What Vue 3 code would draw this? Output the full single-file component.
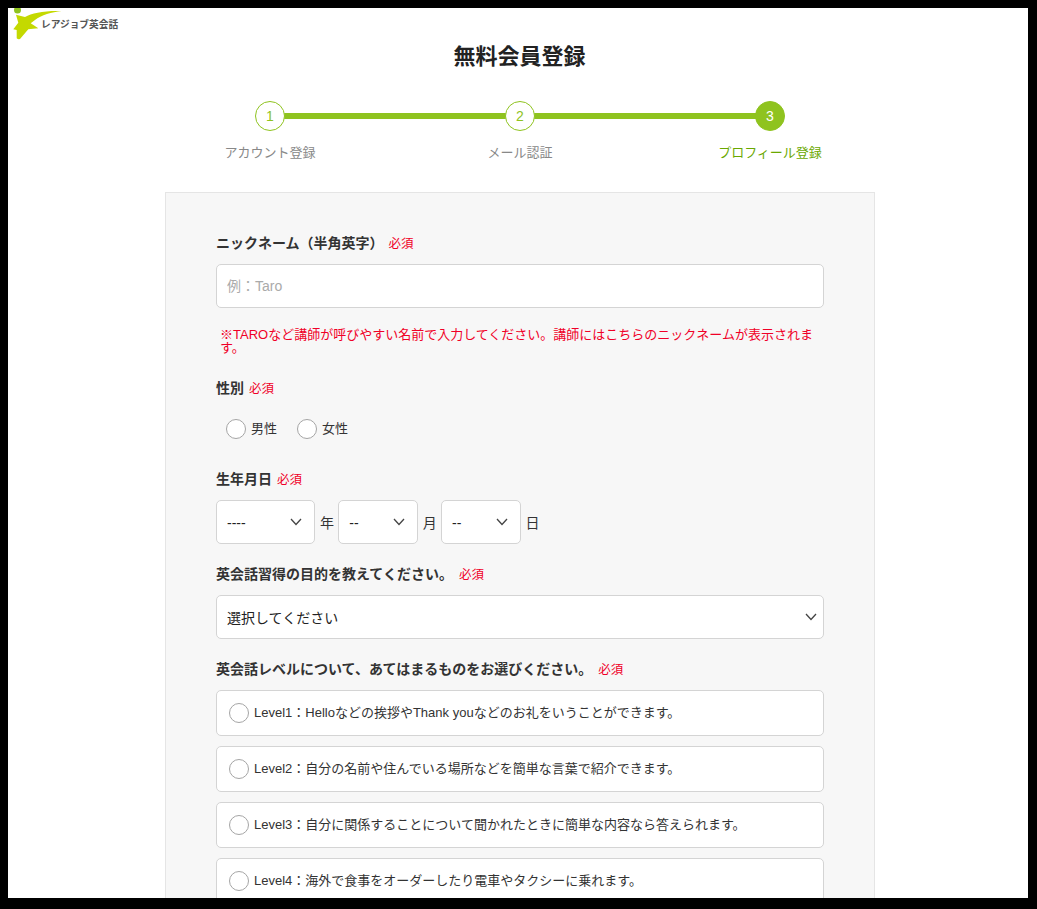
<template>
  <div class="frame">
    <header class="logo">
      <svg class="logo-mark" viewBox="0 0 56 34" width="56" height="34" aria-hidden="true">
        <circle cx="9.5" cy="2" r="3.5" fill="#8fc31f" />
        <path
          d="M8 6.7 L17 9 C24 5 36 2.5 53.5 3 C44 4 33 7 27 12 L22.7 15.3 L30.3 20.3 L20.3 21.3 L12 31 Q10 31.5 8.7 30.3 L8.7 22 L5.3 21.3 L10.3 14.7 Z"
          fill="#c4d900"
        />
      </svg>
      <span class="logo-text">レアジョブ英会話</span>
    </header>

    <h1 class="title">無料会員登録</h1>

    <!-- Steps -->
    <ol class="steps">
      <li
        v-for="(step, i) in steps"
        :key="step"
        class="step"
        :class="{ current: i === 2, linked: i < 2 }"
      >
        <span class="step-num">{{ i + 1 }}</span>
        <span class="step-label">{{ step }}</span>
      </li>
    </ol>

    <form class="panel">
      <div class="label nick-label">ニックネーム（半角英字）<em class="req">必須</em></div>
      <input class="field" type="text" placeholder="例：Taro" />
      <p class="note">※TAROなど講師が呼びやすい名前で入力してください。講師にはこちらのニックネームが表示されます。</p>

      <div class="label gender-label">性別<em class="req">必須</em></div>
      <div class="gender">
        <label class="radio-item"><span class="radio"></span><span class="radio-text">男性</span></label>
        <label class="radio-item"><span class="radio"></span><span class="radio-text">女性</span></label>
      </div>

      <div class="label birth-label">生年月日<em class="req">必須</em></div>
      <div class="birth">
        <div class="select-wrap year">
          <select class="field"><option>----</option></select>
          <svg class="chevron" viewBox="0 0 12 8" aria-hidden="true"><path d="M1 1 L6 6.5 L11 1" /></svg>
        </div>
        <span class="unit">年</span>
        <div class="select-wrap short">
          <select class="field"><option>--</option></select>
          <svg class="chevron" viewBox="0 0 12 8" aria-hidden="true"><path d="M1 1 L6 6.5 L11 1" /></svg>
        </div>
        <span class="unit">月</span>
        <div class="select-wrap short">
          <select class="field"><option>--</option></select>
          <svg class="chevron" viewBox="0 0 12 8" aria-hidden="true"><path d="M1 1 L6 6.5 L11 1" /></svg>
        </div>
        <span class="unit">日</span>
      </div>

      <div class="label purpose-label">英会話習得の目的を教えてください。<em class="req req-wide">必須</em></div>
      <div class="select-wrap full">
        <select class="field"><option>選択してください</option></select>
        <svg class="chevron" viewBox="0 0 12 8" aria-hidden="true"><path d="M1 1 L6 6.5 L11 1" /></svg>
      </div>

      <div class="label level-label">英会話レベルについて、あてはまるものをお選びください。<em class="req req-wide">必須</em></div>
      <div class="levels">
        <label v-for="level in levels" :key="level" class="level">
          <span class="radio"></span><span class="radio-text">{{ level }}</span>
        </label>
      </div>
    </form>
  </div>
</template>

<script setup>
const steps = ['アカウント登録', 'メール認証', 'プロフィール登録']

const levels = [
  'Level1：Helloなどの挨拶やThank youなどのお礼をいうことができます。',
  'Level2：自分の名前や住んでいる場所などを簡単な言葉で紹介できます。',
  'Level3：自分に関係することについて聞かれたときに簡単な内容なら答えられます。',
  'Level4：海外で食事をオーダーしたり電車やタクシーに乗れます。',
]
</script>

<style>
html,
body {
  margin: 0;
  height: 100%;
  background: #000;
  overflow: hidden;
}
</style>

<style scoped>
.frame {
  box-sizing: border-box;
  width: 1020px;
  height: 890px;
  margin: 8px 0 0 8px;
  background: #fff;
  overflow: hidden;
  color: #333;
  font-family: "Liberation Sans", "Noto Sans CJK JP", sans-serif;
}

/* ── Logo ───────────────────────────────────────────────── */
.logo {
  display: flex;
  align-items: center;
  height: 32px;
}

.logo-mark {
  flex: none;
  align-self: flex-start;
  margin-right: -23px;
  overflow: hidden;
}

.logo-text {
  font-size: 9.7px;
  font-weight: 700;
  color: #555;
}

/* ── Title ──────────────────────────────────────────────── */
.title {
  margin: 3px 0 0;
  padding-left: 3px;
  height: 28px;
  line-height: 28px;
  text-align: center;
  font-size: 22px;
  font-weight: 700;
  color: #222;
}

/* ── Steps ──────────────────────────────────────────────── */
.steps {
  display: flex;
  list-style: none;
  width: 750px;
  margin: 30px 0 0 137px;
  padding: 0;
}

.step {
  position: relative;
  flex: 1;
  display: flex;
  flex-direction: column;
  align-items: center;
  gap: 12px;
}

.step.linked::after {
  content: "";
  position: absolute;
  left: 50%;
  top: 12px;
  width: 100%;
  height: 6px;
  background: #8fc31f;
}

.step-num {
  position: relative;
  z-index: 1;
  box-sizing: border-box;
  width: 30px;
  height: 30px;
  border: 1px solid #8fc31f;
  border-radius: 50%;
  background: #fff;
  color: #8fc31f;
  font-size: 14px;
  line-height: 28px;
  text-align: center;
}

.step-label {
  font-size: 13px;
  line-height: 20px;
  color: #888;
}

.current .step-num {
  background: #8fc31f;
  color: #fff;
}

.current .step-label {
  color: #6aa800;
}

/* ── Panel ──────────────────────────────────────────────── */
.panel {
  box-sizing: border-box;
  width: 710px;
  margin: 29px 0 0 157px;
  padding: 40px 50px 40px;
  border: 1px solid #e5e5e5;
  background: #f7f7f7;
}

.label {
  height: 20px;
  line-height: 20px;
  font-size: 14px;
  font-weight: 700;
  color: #333;
  margin-bottom: 11px;
}

.req {
  margin-left: 5px;
  font-size: 12.5px;
  font-style: normal;
  font-weight: 400;
  color: #f00027;
}

.req-wide {
  margin-left: 6px;
}

.field {
  display: block;
  box-sizing: border-box;
  width: 100%;
  height: 44px;
  padding: 0 10px;
  border: 1px solid #d4d4d4;
  border-radius: 5px;
  background: #fff;
  color: #222;
  font-family: inherit;
  font-size: 14px;
  outline: none;
  appearance: none;
}

select.field {
  padding-top: 2px;
}

.field::placeholder {
  color: #aaa;
}

.note {
  margin: 20px 0 0;
  padding: 0 4px;
  font-size: 13px;
  line-height: 13px;
  color: #f00027;
}

.gender-label {
  margin: 24px 0 21px;
}

.gender {
  display: flex;
  gap: 20px;
  padding-left: 10px;
}

.radio-item {
  display: flex;
  align-items: center;
  gap: 5px;
  height: 20px;
  font-size: 13px;
}

.radio {
  flex: none;
  box-sizing: border-box;
  width: 20px;
  height: 20px;
  border: 1.5px solid #a5a5a5;
  border-radius: 50%;
  background: #fff;
}

.radio-text {
  margin-bottom: 3px;
}

.birth-label {
  margin-top: 30px;
}

.birth {
  display: flex;
  align-items: center;
}

.select-wrap {
  position: relative;
}

.select-wrap.year {
  width: 99px;
}

.select-wrap.short {
  width: 79.5px;
}

.unit {
  width: 23.25px;
  padding-left: 5px;
  box-sizing: border-box;
  font-size: 14px;
}

.chevron {
  position: absolute;
  right: 13px;
  top: 18px;
  width: 12px;
  height: 8px;
  fill: none;
  stroke: #444;
  stroke-width: 1.3;
  pointer-events: none;
}

.full .chevron {
  right: 7px;
}

.purpose-label,
.level-label {
  margin-top: 20px;
}

/* ── Levels ─────────────────────────────────────────────── */
.levels {
  display: flex;
  flex-direction: column;
  gap: 10px;
}

.level {
  display: flex;
  align-items: center;
  gap: 5px;
  box-sizing: border-box;
  height: 46px;
  padding-left: 12px;
  border: 1px solid #d4d4d4;
  border-radius: 5px;
  background: #fff;
  font-size: 13px;
}
</style>
